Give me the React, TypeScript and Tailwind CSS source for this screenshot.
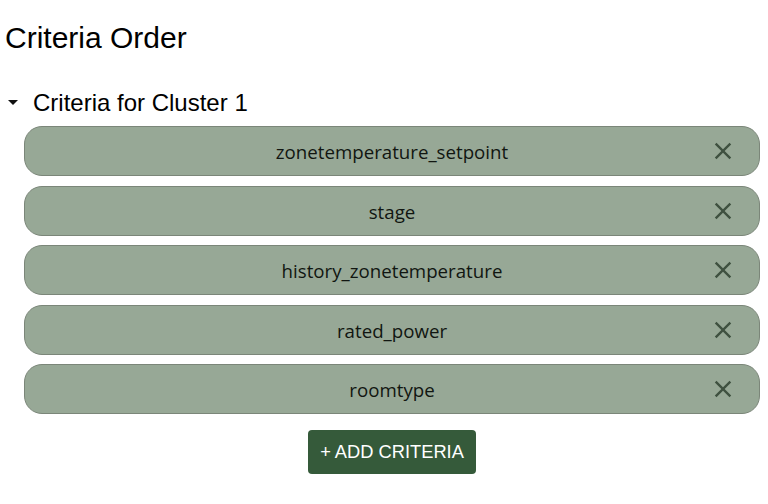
const criteria = [
  "zonetemperature_setpoint",
  "stage",
  "history_zonetemperature",
  "rated_power",
  "roomtype",
];

function CloseIcon() {
  return (
    <svg width="28" height="28" viewBox="0 0 24 24" fill="#3f5140">
      <path d="M19 6.41L17.59 5 12 10.59 6.41 5 5 6.41 10.59 12 5 17.59 6.41 19 12 13.41 17.59 19 19 17.59 13.41 12z" />
    </svg>
  );
}

export default function App() {
  return (
    <div className="min-h-[504px] bg-white font-['Liberation_Sans',Arial,sans-serif] text-black">
      <h1 className="px-[5px] pt-[20px] text-[30px] leading-[36px]">Criteria Order</h1>

      <div className="mt-[33px] flex items-center">
        <svg width="10" height="6" viewBox="0 0 10 6" className="ml-[8px] mr-[15px]">
          <path d="M0 0 L10 0 L5 5 Z" fill="#111" />
        </svg>
        <span className="text-[24px] leading-[28px]">Criteria for Cluster 1</span>
      </div>

      <div className="mt-[9px] flex flex-col gap-[9.5px] pl-[24px] pr-[8px]">
        {criteria.map((c) => (
          <div
            key={c}
            className="relative flex h-[50px] items-center justify-center rounded-[18px] border border-[#7b8679] bg-[#97a896]"
          >
            <span className="pt-[3px] font-['Open_Sans',sans-serif] text-[18.7px] text-[#111611]">{c}</span>
            <button className="absolute right-[22px] top-1/2 -translate-y-1/2">
              <CloseIcon />
            </button>
          </div>
        ))}
      </div>

      <div className="mt-[16px] flex justify-center">
        <button className="ml-[16px] h-[44px] rounded-[4px] bg-[#355a3a] px-[12px] text-[18.3px] text-white">
          + ADD CRITERIA
        </button>
      </div>
    </div>
  );
}
